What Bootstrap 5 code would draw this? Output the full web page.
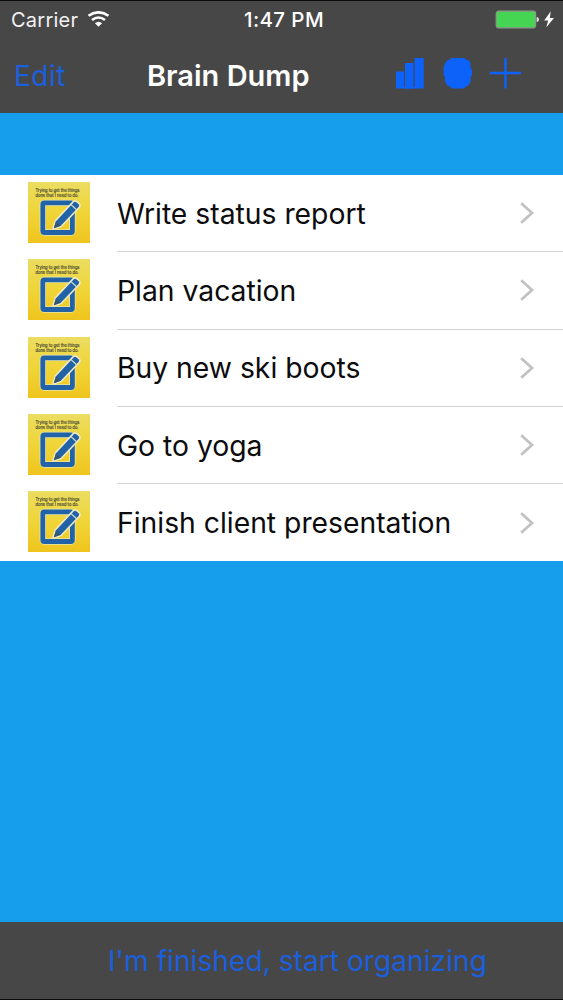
<!DOCTYPE html>
<html lang="en">
<head>
<meta charset="utf-8">
<meta name="viewport" content="width=device-width, initial-scale=1">
<title>Brain Dump</title>
<link href="https://cdn.jsdelivr.net/npm/bootstrap@5.3.0/dist/css/bootstrap.min.css" rel="stylesheet">
<style>
body { font-family: Inter, "Liberation Sans", sans-serif; background: #169dec; }
.app { height: 1000px; width: 563px; }
.bar { background: #484748; }
.top-bar { height: 113px; border-top: 1px solid #0b0b0d; }
.status-row { height: 37px; font-size: 20px; color: #f2f2f3; line-height: 36px; }
.carrier { padding-left: 11px; width: 188px; letter-spacing: .25px; }
.clock { font-size: 20.5px; font-weight: 500; letter-spacing: .4px; color: #fff; padding: 1px 0 0 5px; }
.power { width: 188px; padding-right: 8px; }
.title-row { height: 75px; }
.link-blue { color: #1a5fdc; font-size: 28.2px; }
.edit-link { width: 147px; padding: 1px 0 0 14px; letter-spacing: .4px; }
.page-title { font-size: 29px; font-weight: 600; color: #fff; width: 248px; padding-top: 2px; }
.nav-icons { padding-bottom: 6px; }
.spacer { height: 62px; }
.task-list { height: 386.5px; }
.task { height: 77.3px; padding: 0 0 0 28px; color: #0c0c0e; background: #fff; }
.thumb { width: 62px; height: 61px; margin: 7px 27px 0 0; }
.task-body { height: 100%; border-bottom: 1px solid #d3d3d5; padding: 0 28px 0 0; font-size: 28.3px; }
.task-body span { padding-top: 1.6px; }
.task:last-child .task-body { border-bottom: 0; }
.bottom-bar { height: 78px; border-bottom: 1px solid #0b0b0d; padding: 2px 0 0 32px; }
</style>
</head>
<body>
<svg width="0" height="0" class="position-absolute">
  <defs>
    <linearGradient id="gold" x1="0" y1="0" x2="0" y2="1"><stop offset="0" stop-color="#ebdd62"/><stop offset=".5" stop-color="#f0d538"/><stop offset="1" stop-color="#efc41e"/></linearGradient>
    <symbol id="note" viewBox="0 0 62 61">
      <rect width="62" height="61" fill="url(#gold)"/>
      <rect x="14.8" y="20.9" width="29.6" height="29.6" rx="2" fill="none" stroke="#e8e6b4" stroke-width="6.4"/>
      <rect x="14.8" y="20.9" width="29.6" height="29.6" rx="1.5" fill="none" stroke="#2163a6" stroke-width="4.8"/>
      <path d="M25.8 46.2 28 39.2 45.6 20.4Q47 19 48.6 20.400L50.600 22.300Q51.800 23.600 50.600 25L32.800 43.800Z" fill="none" stroke="#efeccb" stroke-width="3" stroke-linejoin="round"/>
      <path d="M25.800 46.200 28 39.200 45.600 20.400Q47 19 48.600 20.400L50.600 22.300Q51.800 23.600 50.600 25L32.800 43.800Z" fill="#2163a6"/>
      <path d="M43 22.600 48.600 27.700" stroke="#d9e2c9" stroke-width="1.200"/>
      <path d="M25.800 46.200 28 39.200 32.800 43.800Z" fill="#36586f"/>
    </symbol>
    <symbol id="chev" viewBox="0 0 16 24"><path d="M2.200 2.200 13 12 2.200 21.800" fill="none" stroke="#c2c2c5" stroke-width="2.800"/></symbol>
  </defs>
</svg>
<div class="app d-flex flex-column overflow-hidden">
  <header class="bar top-bar flex-shrink-0">
    <div class="status-row d-flex justify-content-between">
      <div class="carrier d-flex align-items-center"><span>Carrier</span>
        <svg class="ms-2" width="24" height="18" viewBox="0 0 24 18" fill="none" stroke="#fff" stroke-width="2.600"><path d="M2.500 4.800Q12.500-2.200 22.500 4.800M6 9Q12.500 4 19 9"/><path d="M12.500 15.800 8.900 12.200Q12.500 9.200 16.100 12.200Z" fill="#fff" stroke="none"/></svg>
      </div>
      <div class="clock">1:47 PM</div>
      <div class="power d-flex align-items-center justify-content-end">
        <svg width="60" height="20" viewBox="0 0 60 20"><rect x="1.200" y="1.200" width="39.400" height="16.600" rx="2.500" fill="#45d552" stroke="#8b9a8d" stroke-width="1.200"/><path d="M41.700 7Q44 7.400 44 9.600T41.700 12.200Z" fill="#e6e6e6"/><path d="M55.800 1.200 49.200 10.600H53.200L51.200 17.400 59 8.100H54.800Z" fill="#fff"/></svg>
      </div>
    </div>
    <nav class="title-row d-flex align-items-center">
      <a class="link-blue edit-link text-decoration-none" href="#">Edit</a>
      <h1 class="page-title m-0 text-nowrap">Brain Dump</h1>
      <div class="nav-icons d-flex align-items-center">
        <svg width="30" height="32" viewBox="0 0 30 32" fill="#0d62fa"><path d="M1 14.500H9V31.500H1ZM10 6H18.500V31.500H10ZM19.600 1H28.700V31.500H19.600Z"/><path d="M9 30H20V31.500H9Z"/></svg>
        <svg class="ms-3" width="32" height="32" viewBox="0 0 32 32"><path d="M10.500 1H23L25 2.500 28 3.500 29.500 6.500V10.500L31 13V18L29.700 20V24.500L27.500 28 25 29.500 23 31.500H11L9 29.800 6 28 4 24.500V20L2.500 18V13L2.700 10.500 4 6.500 6 3.500 9 2.500Z" fill="#0d62fa"/></svg>
        <svg class="ms-3" width="32" height="32" viewBox="0 0 32 32"><path d="M1 16H32M16.500 1V31.500" stroke="#0d62fa" stroke-width="2.400" fill="none"/></svg>
      </div>
    </nav>
  </header>
  <div class="spacer flex-shrink-0"></div>
  <main class="list-group list-group-flush task-list flex-shrink-0 rounded-0">
    <a href="#" class="task d-flex text-decoration-none"><svg class="thumb flex-shrink-0" viewBox="0 0 62 61"><use href="#note"/><g font-size="4.500" fill="#414333" stroke="#414333" stroke-width=".15"><text x="7.500" y="10" textLength="44" lengthAdjust="spacingAndGlyphs">Trying to get the things</text><text x="7.500" y="14.800" textLength="43" lengthAdjust="spacingAndGlyphs">done that I need to do.</text></g></svg><div class="task-body d-flex flex-grow-1 align-items-center justify-content-between"><span>Write status report</span><svg width="16" height="24"><use href="#chev"/></svg></div></a>
    <a href="#" class="task d-flex text-decoration-none"><svg class="thumb flex-shrink-0" viewBox="0 0 62 61"><use href="#note"/><g font-size="4.500" fill="#414333" stroke="#414333" stroke-width=".15"><text x="7.500" y="10" textLength="44" lengthAdjust="spacingAndGlyphs">Trying to get the things</text><text x="7.500" y="14.800" textLength="43" lengthAdjust="spacingAndGlyphs">done that I need to do.</text></g></svg><div class="task-body d-flex flex-grow-1 align-items-center justify-content-between"><span>Plan vacation</span><svg width="16" height="24"><use href="#chev"/></svg></div></a>
    <a href="#" class="task d-flex text-decoration-none"><svg class="thumb flex-shrink-0" viewBox="0 0 62 61"><use href="#note"/><g font-size="4.500" fill="#414333" stroke="#414333" stroke-width=".15"><text x="7.500" y="10" textLength="44" lengthAdjust="spacingAndGlyphs">Trying to get the things</text><text x="7.500" y="14.800" textLength="43" lengthAdjust="spacingAndGlyphs">done that I need to do.</text></g></svg><div class="task-body d-flex flex-grow-1 align-items-center justify-content-between"><span>Buy new ski boots</span><svg width="16" height="24"><use href="#chev"/></svg></div></a>
    <a href="#" class="task d-flex text-decoration-none"><svg class="thumb flex-shrink-0" viewBox="0 0 62 61"><use href="#note"/><g font-size="4.500" fill="#414333" stroke="#414333" stroke-width=".15"><text x="7.500" y="10" textLength="44" lengthAdjust="spacingAndGlyphs">Trying to get the things</text><text x="7.500" y="14.800" textLength="43" lengthAdjust="spacingAndGlyphs">done that I need to do.</text></g></svg><div class="task-body d-flex flex-grow-1 align-items-center justify-content-between"><span>Go to yoga</span><svg width="16" height="24"><use href="#chev"/></svg></div></a>
    <a href="#" class="task d-flex text-decoration-none"><svg class="thumb flex-shrink-0" viewBox="0 0 62 61"><use href="#note"/><g font-size="4.500" fill="#414333" stroke="#414333" stroke-width=".15"><text x="7.500" y="10" textLength="44" lengthAdjust="spacingAndGlyphs">Trying to get the things</text><text x="7.500" y="14.800" textLength="43" lengthAdjust="spacingAndGlyphs">done that I need to do.</text></g></svg><div class="task-body d-flex flex-grow-1 align-items-center justify-content-between"><span>Finish client presentation</span><svg width="16" height="24"><use href="#chev"/></svg></div></a>
  </main>
  <footer class="bar bottom-bar mt-auto flex-shrink-0 d-flex align-items-center justify-content-center">
    <a class="link-blue text-decoration-none text-nowrap" href="#">I'm finished, start organizing</a>
  </footer>
</div>
<script src="https://cdn.jsdelivr.net/npm/bootstrap@5.3.0/dist/js/bootstrap.bundle.min.js"></script>
</body>
</html>
